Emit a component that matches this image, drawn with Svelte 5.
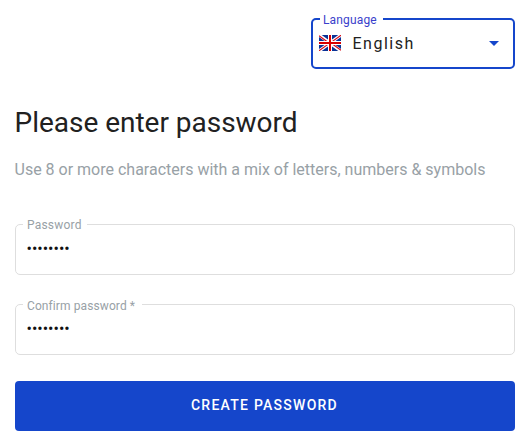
<script>
  let fields = $state([
    { id: 'password', label: 'Password', gap: 64, top: 0, spacing: 0.2, value: 'abcd123!' },
    { id: 'confirm', label: 'Confirm password *', gap: 119, top: 1, spacing: 0.1, value: 'abcd123!' }
  ]);
</script>

<main>
  <div class="select" role="combobox" aria-expanded="false" aria-controls="languages" tabindex="0">
    <span class="label">Language</span>
    <svg class="flag" width="22" height="16" viewBox="0 0 22 16">
      <rect width="22" height="16" fill="#0a3296" />
      <path d="M0 0L22 16M22 0L0 16" stroke="#fff" stroke-width="3.2" />
      <path d="M0 .7L10 8M22 .2L12 7.4M22 15.3L12 8M0 15.8L10 8.6" stroke="#d80a18" stroke-width="1.1" />
      <path d="M11 0V16M0 8H22" stroke="#fff" stroke-width="4" />
      <path d="M11 0V16M0 8H22" stroke="#d80000" stroke-width="2" />
    </svg>
    <span class="value">English</span>
    <svg class="arrow" width="10" height="5" viewBox="0 0 10 5"><path d="M0 0H10L5 5Z" fill="#1546cb" /></svg>
  </div>

  <h1>Please enter password</h1>
  <p>Use 8 or more characters with a mix of letters, numbers &amp; symbols</p>

  {#each fields as field (field.id)}
    <div class="field">
      <label
        for={field.id}
        style:width="{field.gap}px"
        style:padding-top="{field.top}px"
        style:letter-spacing="{field.spacing}px">{field.label}</label>
      <input id={field.id} type="password" bind:value={field.value} />
    </div>
  {/each}

  <button type="button">CREATE PASSWORD</button>
</main>

<style>
  :global(body) { background: #fff; }
  main {
    box-sizing: border-box;
    width: 529px;
    height: 437px;
    padding: 18px 14px 0 15px;
    display: flex;
    flex-direction: column;
    font-family: Roboto, sans-serif;
    color: #212121;
    overflow: hidden;
  }
  .select {
    position: relative;
    box-sizing: border-box;
    align-self: flex-end;
    width: 204px;
    height: 51px;
    flex: none;
    border: 2px solid #1546cb;
    border-radius: 5px;
    display: flex;
    align-items: center;
    padding: 0 14px 0 6px;
    outline: none;
  }
  .label {
    position: absolute;
    left: 7px;
    top: -7px;
    box-sizing: border-box;
    width: 63px;
    height: 14px;
    padding-left: 3px;
    background: #fff;
    color: #3a3fcb;
    font-size: 12px;
    line-height: 14px;
    letter-spacing: 0.15px;
    white-space: nowrap;
  }
  .flag {
    flex: none;
    margin-bottom: 1px;
  }
  .value {
    margin-left: 11.5px;
    flex: 1;
    font-size: 16px;
    line-height: 20px;
    letter-spacing: 1.5px;
  }
  .arrow { flex: none; }
  h1 {
    margin: 37px 0 0 -0.5px;
    font-size: 28px;
    line-height: 34px;
    font-weight: 400;
    letter-spacing: -0.02px;
    white-space: nowrap;
  }
  p {
    margin: 20px 0 0 -0.5px;
    font-size: 16px;
    line-height: 20px;
    color: #98a1a6;
    white-space: nowrap;
  }
  .field {
    position: relative;
    box-sizing: border-box;
    flex: none;
    height: 51px;
    margin-top: 29px;
    border: 1px solid #dedede;
    border-radius: 5px;
    display: flex;
  }
  p + .field { margin-top: 44px; }
  label {
    position: absolute;
    left: 7px;
    top: -7px;
    box-sizing: border-box;
    padding-left: 4px;
    background: #fff;
    color: #98a1a6;
    font-size: 12px;
    line-height: 14px;
    white-space: nowrap;
  }
  input {
    flex: 1;
    min-width: 0;
    margin: 0;
    padding: 0 10.5px 3px;
    border: 0;
    outline: 0;
    background: transparent;
    color: #111;
    font: 400 16px Roboto, sans-serif;
  }
  button {
    flex: none;
    height: 50px;
    margin: 26px 0 0;
    padding: 0 1px 3px 0;
    border: 0;
    border-radius: 4px;
    background: #1546cb;
    color: #fff;
    font: 500 14px Roboto, sans-serif;
    letter-spacing: 1.25px;
  }
</style>
